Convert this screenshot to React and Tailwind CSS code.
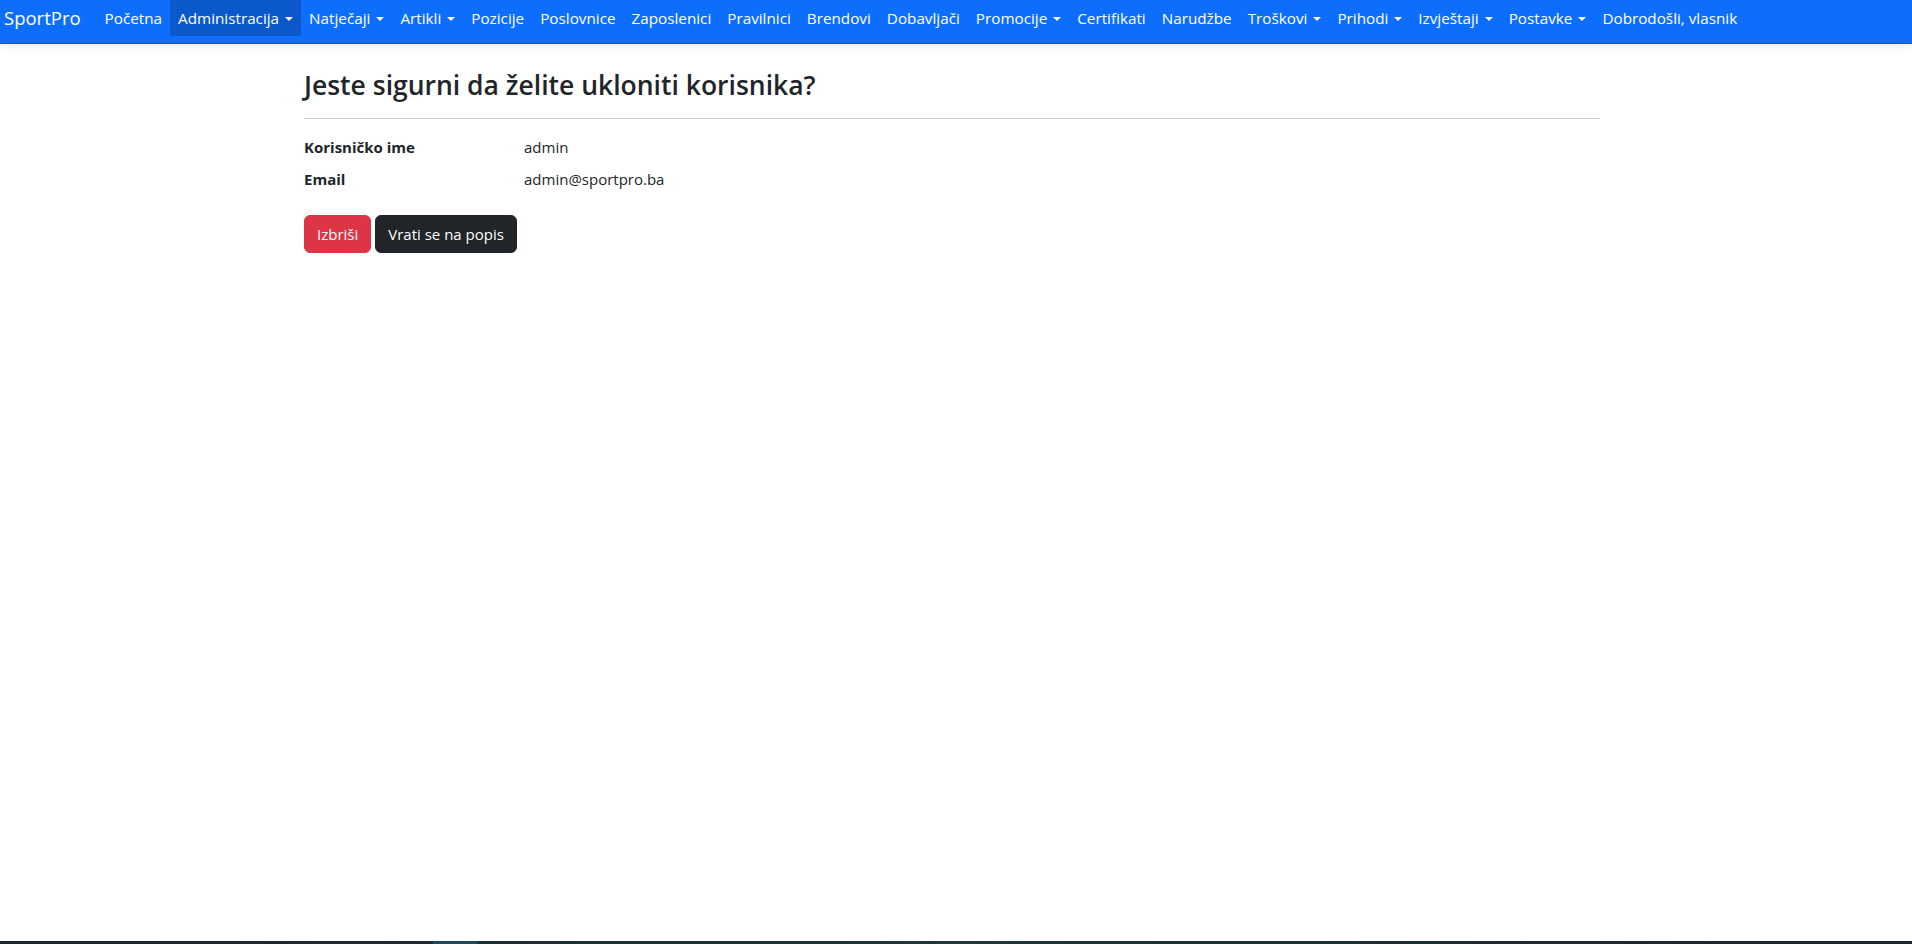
import React from "react";

const navItems = [
  { label: "Početna" },
  { label: "Administracija", dropdown: true, active: true },
  { label: "Natječaji", dropdown: true },
  { label: "Artikli", dropdown: true },
  { label: "Pozicije" },
  { label: "Poslovnice" },
  { label: "Zaposlenici" },
  { label: "Pravilnici" },
  { label: "Brendovi" },
  { label: "Dobavljači" },
  { label: "Promocije", dropdown: true },
  { label: "Certifikati" },
  { label: "Narudžbe" },
  { label: "Troškovi", dropdown: true },
  { label: "Prihodi", dropdown: true },
  { label: "Izvještaji", dropdown: true },
  { label: "Postavke", dropdown: true },
  { label: "Dobrodošli, vlasnik" },
];

const Caret = () => (
  <span className="ml-[6px] inline-block w-0 h-0 border-l-[4.5px] border-r-[4.5px] border-t-[4.5px] border-l-transparent border-r-transparent border-t-white translate-y-[1px]" />
);

const Navbar = () => (
  <nav className="h-[44px] bg-[#0d6efd] border-b border-[#4b4f55] shadow-[0_3px_8px_rgba(0,0,0,0.07)] flex items-start pl-1">
    <a className="text-white text-[18.5px] leading-[36px] mr-4 cursor-pointer">SportPro</a>
    <ul className="flex items-start">
      {navItems.map((item) => (
        <li
          key={item.label}
          className={
            "h-9 px-2 flex items-center text-white text-[15.25px] whitespace-nowrap cursor-pointer " +
            (item.active ? "bg-[#0a58ca]" : "")
          }
        >
          {item.label}
          {item.dropdown && <Caret />}
        </li>
      ))}
    </ul>
  </nav>
);

const App = () => {
  return (
    <div
      className="min-h-screen flex flex-col bg-white text-[#212529]"
      style={{ fontFamily: '"Open Sans", "Noto Sans", sans-serif' }}
    >
      <Navbar />
      <main className="flex-1">
        <div className="ml-[304px] w-[1296px]">
          <h3 className="mt-[26px] text-[26.5px] leading-[1.2] font-semibold">
            Jeste sigurni da želite ukloniti korisnika?
          </h3>
          <hr className="mt-4 mb-4 border-t border-[#c8c9ca]" />
          <dl className="grid grid-cols-[220px_1fr] text-[15px] leading-6 mb-4">
            <dt className="font-bold mb-2">Korisničko ime</dt>
            <dd className="mb-2">admin</dd>
            <dt className="font-bold mb-2">Email</dt>
            <dd className="mb-2">admin@sportpro.ba</dd>
          </dl>
          <div className="flex gap-1">
            <button className="bg-[#dc3545] text-white text-[15px] leading-6 px-3 py-[6px] border border-[#dc3545] rounded-md">
              Izbriši
            </button>
            <button className="bg-[#212529] text-white text-[15px] leading-6 px-3 py-[6px] border border-[#212529] rounded-md">
              Vrati se na popis
            </button>
          </div>
        </div>
      </main>
      <div className="h-[3px] flex bg-gradient-to-r from-[#1a272c] via-[#22343d] to-[#1a272c]">
        <div className="w-[433px]" />
        <div className="w-[45px] bg-[#1f4a5c]" />
      </div>
    </div>
  );
};

export default App;
